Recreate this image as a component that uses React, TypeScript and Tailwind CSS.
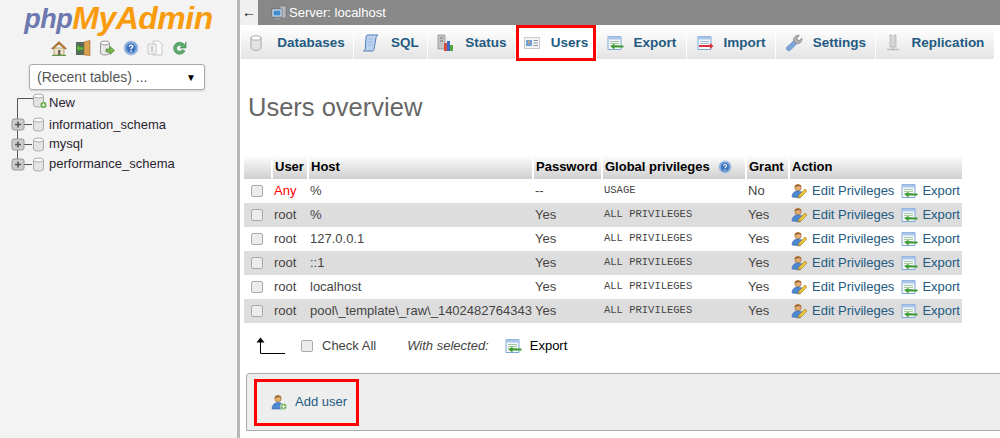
const users = [
  { user: "Any", host: "%", password: "--", privileges: "USAGE", grant: "No" },
  { user: "root", host: "%", password: "Yes", privileges: "ALL PRIVILEGES", grant: "Yes" },
  { user: "root", host: "127.0.0.1", password: "Yes", privileges: "ALL PRIVILEGES", grant: "Yes" },
  { user: "root", host: "::1", password: "Yes", privileges: "ALL PRIVILEGES", grant: "Yes" },
  { user: "root", host: "localhost", password: "Yes", privileges: "ALL PRIVILEGES", grant: "Yes" },
  { user: "root", host: "pool\\_template\\_raw\\_1402482764343", password: "Yes", privileges: "ALL PRIVILEGES", grant: "Yes" },
];

function DbIcon({ size = 14 }: { size?: number }) {
  return (
    <svg width={size} height={size + 2} viewBox="0 0 14 16">
      <path d="M2 3v10c0 1.4 2.2 2.4 5 2.4s5-1 5-2.4V3z" fill="#e4e4e4" stroke="#aaa" />
      <ellipse cx="7" cy="3" rx="5" ry="2.2" fill="#fafafa" stroke="#aaa" />
    </svg>
  );
}

function HomeIcon() {
  return (
    <svg width="16" height="16" viewBox="0 0 16 16">
      <path d="M3 8h10v7H3z" fill="#efe3c4" stroke="#9a8a60" strokeWidth=".7" />
      <path d="M7 10h2.4v5H7z" fill="#6a6a6a" />
      <path d="M0.5 8.5 8 1.5l7.500 7-1.500.6L8 4 2 9.100z" fill="#b8742a" stroke="#8a5520" strokeWidth=".5" />
      <path d="M1 15.500h14" stroke="#5b9a3c" strokeWidth="1.200" />
    </svg>
  );
}

function DoorIcon() {
  return (
    <svg width="16" height="16" viewBox="0 0 16 16">
      <path d="M1 2h13v13H1z" fill="#596a5c" />
      <path d="M9 2l6-1.500v15L9 15z" fill="#d8a050" stroke="#9a6a28" strokeWidth=".6" />
      <path d="M1 8l3.500-3.500V7h4v3h-4v2.500z" fill="#64b448" stroke="#2f7a22" strokeWidth=".5" />
    </svg>
  );
}

function DbArrowIcon() {
  return (
    <svg width="16" height="16" viewBox="0 0 16 16">
      <path d="M1.500 3v10c0 1.200 2 2 4.500 2s4.500-.8 4.500-2V3z" fill="#e8e8e8" stroke="#999" />
      <ellipse cx="6" cy="3" rx="4.500" ry="2" fill="#fafafa" stroke="#999" />
      <path d="M7 9h4V6.500l4.500 4-4.500 4V12H7z" fill="#78b84c" stroke="#3f7a28" strokeWidth=".6" />
    </svg>
  );
}

function HelpIcon({ size = 16 }: { size?: number }) {
  return (
    <svg width={size} height={size} viewBox="0 0 16 16">
      <circle cx="8" cy="8" r="7" fill="#7fa8dc" stroke="#b5c8e2" />
      <circle cx="8" cy="8" r="4.600" fill="#3d72bc" />
      <path d="M6.300 6.600c.2-2 3.500-2 3.500 0 0 1.200-1.800 1.300-1.800 2.600" fill="none" stroke="#fff" strokeWidth="1.300" />
      <path d="M7.300 10.300h1.400v1.400H7.300z" fill="#fff" />
    </svg>
  );
}

function DocsIcon() {
  return (
    <svg width="16" height="16" viewBox="0 0 16 16">
      <path d="M6 1h6l3 3v11H6z" fill="#fafafa" stroke="#c8c8c8" />
      <path d="M1 4h8v10H1z" fill="#f2f2f2" stroke="#c8c8c8" />
      <path d="M4 6h2v6H4z" fill="#ccc" />
    </svg>
  );
}

function ReloadIcon() {
  return (
    <svg width="16" height="16" viewBox="0 0 16 16">
      <path d="M14 5.500A6 6 0 1 0 14 11l-2.800-1.300a3 3 0 1 1-.2-3.100L9 8h6V2z" fill="#5cae6c" stroke="#2f7a45" strokeWidth=".6" />
    </svg>
  );
}

function ServerIcon() {
  return (
    <svg width="16" height="16" viewBox="0 0 16 16">
      <path d="M9 1h6v12H9z" fill="#b4b8bc" stroke="#6a6f75" strokeWidth=".6" />
      <path d="M1 4h10v8H1z" fill="#dfe6ee" stroke="#5c6670" strokeWidth=".7" />
      <path d="M2.500 5.500h7v5h-7z" fill="#3f8fd0" />
      <path d="M4 13h5v1.500H4z" fill="#9aa0a6" />
    </svg>
  );
}

function ScrollIcon() {
  return (
    <svg width="18" height="18" viewBox="0 0 18 18">
      <path d="M5 1h11c-1.500 1-2 2-2.200 4L12 15c-.3 1.500-1 2-2 2H1.500c1-.4 1.600-1 1.800-2.500L4 4c.1-1.500.3-2.400 1-3z" fill="#bcd2ee" stroke="#4f7fb8" />
      <path d="M6.500 5h5M6 8h5M5.500 11h5" stroke="#8fb0d8" strokeWidth=".8" />
    </svg>
  );
}

function StatusIcon() {
  return (
    <svg width="18" height="18" viewBox="0 0 18 18">
      <path d="M2 1h7v14H2z" fill="#c4c4c4" stroke="#8a8a8a" strokeWidth=".7" />
      <path d="M4 4h3M4 7h3" stroke="#777" />
      <path d="M8 9h3v8H8z" fill="#d84a3a" />
      <path d="M11 7h3v10h-3z" fill="#3c6ec8" />
      <path d="M14 11h3v6h-3z" fill="#52a83c" />
    </svg>
  );
}

function UsersCardIcon() {
  return (
    <svg width="16" height="12" viewBox="0 0 16 12">
      <path d="M.5 .5h15v11H.5z" fill="#f4f4f4" stroke="#c8c8c8" />
      <path d="M2 3h6v6H2z" fill="#6c9ed8" />
      <path d="M4 4h2v2.500H4z" fill="#d8a060" />
      <path d="M9.500 3.500h4.500M9.500 6h4.500M9.500 8.500h4.500" stroke="#8a96a8" />
    </svg>
  );
}

function TableArrowIcon({ direction = "in" }: { direction?: "in" | "out" }) {
  const color = direction === "in" ? "#3d9a2e" : "#e0303a";
  return (
    <svg width="17" height="16" viewBox="0 0 17 16">
      <path d="M1 1.500h13v13H1z" fill="#f4f8fc" stroke="#7ea6d6" />
      <path d="M1 1.500h13v3H1z" fill="#a9c6e8" />
      <path d="M3 6.500h9M3 8.500h9M3 10.500h9" stroke={direction === "in" ? "#a8c8a0" : "#a0bce0"} />
      {direction === "in" ? (
        <path d="M16.500 10.500H7.500V8.500L3.500 11.500l4 3v-2h9z" fill={color} />
      ) : (
        <path d="M2 10h11V8l3.500 3-3.500 3v-2H2z" fill={color} />
      )}
    </svg>
  );
}

function WrenchIcon() {
  return (
    <svg width="18" height="18" viewBox="0 0 18 18">
      <path d="M1.500 13.500 9 6.500l3 3-7 7c-1.500 1-4.500-1-3.500-3z" fill="#7fa4dc" stroke="#5a80b8" strokeWidth=".6" />
      <path d="M8.500 7C8 3.500 11 .5 14.500 1.500L12 4l.5 2 2 .5 2.500-2.500c.5 3.500-2.500 6.500-5.500 5.500z" fill="#b0b0b0" stroke="#7a7a7a" strokeWidth=".6" />
    </svg>
  );
}

function ReplicationIcon() {
  return (
    <svg width="14" height="18" viewBox="0 0 14 18">
      <path d="M4 1h2v12H4zM8 1h2v12H8z" fill="#ddd" stroke="#aaa" strokeWidth=".7" />
      <path d="M6.500 13h1v2h-1z" fill="#999" />
      <path d="M1 15.500h12" stroke="#bbb" strokeWidth="1.500" />
    </svg>
  );
}

function EditUserIcon() {
  return (
    <svg width="16" height="16" viewBox="0 0 16 16" className="shrink-0">
      <circle cx="7" cy="4.500" r="3.200" fill="#e8b070" stroke="#8a5a2a" strokeWidth=".6" />
      <path d="M3.800 4C4 1.500 10 1.500 10.200 4L8 3z" fill="#7a4a1e" />
      <path d="M1 14c0-4 2.500-6 6-6s5 1.500 5 3l-3 4z" fill="#4f86d0" stroke="#2f5f9f" strokeWidth=".5" />
      <path d="M7 15l1-3 6-6 2 2-6 6z" fill="#f0c040" stroke="#a07a18" strokeWidth=".6" />
    </svg>
  );
}

function AddUserIcon() {
  return (
    <svg width="16" height="16" viewBox="0 0 16 16">
      <circle cx="7" cy="4.500" r="3.200" fill="#e8b070" stroke="#8a5a2a" strokeWidth=".6" />
      <path d="M3.800 4C4 1.500 10 1.500 10.200 4L8 3z" fill="#7a4a1e" />
      <path d="M1 15c0-4 2.500-6.500 6-6.500s5 2 5 4v2.500z" fill="#4f86d0" stroke="#2f5f9f" strokeWidth=".5" />
      <circle cx="12.500" cy="12.500" r="3.200" fill="#5aa83e" stroke="#fff" strokeWidth=".6" />
      <path d="M12.500 10.500v4M10.500 12.500h4" stroke="#fff" strokeWidth="1.200" />
    </svg>
  );
}

function TreeRow({ name, first = false, last = false }: { name: string; first?: boolean; last?: boolean }) {
  return (
    <div className="flex h-[19.6px] items-center">
      <svg width="48" height="20" viewBox="0 0 48 20" className="ml-[1px] shrink-0 overflow-visible">
        {first ? (
          <path d="M16.500 20V3.500H32" fill="none" stroke="#555" />
        ) : (
          <>
            <path d={last ? "M16.500 0v10" : "M16.500 0v20"} fill="none" stroke="#555" />
            <path d="M21 10.500h10" fill="none" stroke="#555" />
            <rect x="11" y="5" width="12" height="11" rx="2" fill="#ccc" stroke="#999" />
            <path d="M14 10.500h6M17 7.500v6" stroke="#555" strokeWidth="1.600" />
          </>
        )}
        <g transform={first ? "translate(32 -2)" : "translate(32 3)"}>
          <path d="M0.500 3v9c0 1.300 2 2 5 2s5-.7 5-2V3z" fill="#e4e4e4" stroke="#aaa" />
          <ellipse cx="5.500" cy="3" rx="5" ry="2" fill="#fafafa" stroke="#aaa" />
          {first && (
            <>
              <circle cx="10.500" cy="12" r="3" fill="#58a83c" />
              <path d="M8.700 12h3.600M10.500 10.200v3.600" stroke="#fff" strokeWidth="1" />
            </>
          )}
        </g>
      </svg>
      <span className={first ? "-mt-[4px] text-[13px] text-[#235a81]" : "text-[13px] text-[#235a81]"} style={{ color: "#2a2430" }}>
        {name}
      </span>
    </div>
  );
}

const tabs = [
  { label: "Databases", width: "w-[112px]", gap: "gap-[14px]", icon: <DbIcon /> },
  { label: "SQL", width: "w-[73px]", gap: "gap-[11px]", icon: <ScrollIcon /> },
  { label: "Status", width: "w-[87px]", gap: "gap-[11px]", icon: <StatusIcon /> },
  { label: "Users", width: "w-[80px]", gap: "gap-[11px]", icon: <UsersCardIcon />, active: true },
  { label: "Export", width: "w-[89px]", gap: "gap-[10px]", icon: <TableArrowIcon /> },
  { label: "Import", width: "w-[88px]", gap: "gap-[10px]", icon: <TableArrowIcon direction="out" /> },
  { label: "Settings", width: "w-[99px]", gap: "gap-[10px]", icon: <WrenchIcon /> },
  { label: "Replication", width: "w-[118px]", gap: "gap-[12px]", icon: <ReplicationIcon /> },
];

export default function App() {
  return (
    <div className="flex h-[438px] w-[1000px] overflow-hidden bg-white font-['Liberation_Sans',Arial,sans-serif] text-[13px] text-[#444]">
      {/* Navigation */}
      <aside className="flex w-[240px] shrink-0 flex-col border-r-[3px] border-[#b8b8b8] bg-[#f3f3f3]">
        <div className="mt-[1px] flex h-[34px] items-center justify-center pl-[0px] font-bold italic leading-none tracking-[-0.5px]">
          <span className="mt-[2px] text-[27px] text-[#6c78af]">php</span>
          <span className="text-[32px] text-[#f89c0e]">MyAdmin</span>
        </div>
        <div className="mt-[4px] flex h-[18px] items-center justify-center gap-[8px] pl-[-2px]">
          <HomeIcon />
          <DoorIcon />
          <DbArrowIcon />
          <HelpIcon />
          <DocsIcon />
          <ReloadIcon />
        </div>
        <div className="mx-[29px] mt-[7px] flex h-[26px] w-[176px] items-center justify-between rounded-[3px] border border-[#aaa] bg-white pl-[7px] pr-[8px] text-[14px] text-[#555] shadow-[0_1px_2px_#ccc]">
          <span>(Recent tables) ...</span>
          <span className="text-[10px] text-black">▼</span>
        </div>
        <div className="mt-[5px] flex flex-col">
          <TreeRow name="New" first />
          <TreeRow name="information_schema" />
          <TreeRow name="mysql" />
          <TreeRow name="performance_schema" last />
        </div>
      </aside>

      {/* Main */}
      <main className="flex min-w-0 flex-1 flex-col">
        <div className="flex h-[25px] shrink-0 items-center bg-[#888]">
          <div className="flex h-[25px] w-[18px] items-center justify-center bg-[#f0f0f0] text-[14px] text-black">←</div>
          <div className="ml-[13px] flex items-center gap-[2px] text-white">
            <ServerIcon />
            <span className="text-[13px]">Server: localhost</span>
          </div>
        </div>

        <nav className="mt-[2px] flex h-[32px] shrink-0 gap-[1px] pl-[1px] text-[13.500px] font-bold text-[#235a81]">
          {tabs.map((tab) => (
            <div
              key={tab.label}
              className={`relative flex h-[32px] items-center justify-center ${tab.gap} ${tab.width} ${
                tab.active ? "bg-white" : "bg-gradient-to-b from-white to-[#e4e4e4]"
              }`}
            >
              {tab.active && <div className="absolute inset-x-0 -top-[2px] -bottom-[2px] border-[3px] border-[#f00]" />}
              {tab.icon}
              <span>{tab.label}</span>
            </div>
          ))}
        </nav>

        <h2 className="ml-[8px] mt-[33px] text-[25.500px] leading-[30px] text-[#666]">Users overview</h2>

        <table className="ml-[4px] mt-[33px] w-[718px] table-fixed border-collapse">
          <colgroup>
            <col className="w-[28px]" />
            <col className="w-[36px]" />
            <col className="w-[225px]" />
            <col className="w-[69px]" />
            <col className="w-[144px]" />
            <col className="w-[43px]" />
            <col className="w-[173px]" />
          </colgroup>
          <thead>
            <tr className="h-[24px] bg-gradient-to-b from-white to-[#cfcfcf] text-left font-bold text-black">
              <th className="border-r-2 border-white" />
              <th className="border-r-2 border-white pl-[2px]">User</th>
              <th className="border-r-2 border-white pl-[2px]">Host</th>
              <th className="border-r-2 border-white pl-[2px]">Password</th>
              <th className="border-r-2 border-white pl-[2px]">
                <span className="flex items-center gap-[8px]">
                  Global privileges
                  <HelpIcon size={14} />
                </span>
              </th>
              <th className="border-r-2 border-white pl-[2px]">Grant</th>
              <th className="pl-[2px]">Action</th>
            </tr>
          </thead>
          <tbody>
            {users.map((row, i) => (
              <tr key={i} className={`h-[24px] ${i % 2 === 1 ? "bg-[#ddd]" : "bg-white"}`}>
                <td className="pl-[7px]">
                  <div className="h-[12px] w-[12px] rounded-[2px] border border-[#aaa] bg-[#ececec]" />
                </td>
                <td className={`pl-[2px] ${row.user === "Any" ? "text-[#f00]" : ""}`}>{row.user}</td>
                <td className="whitespace-nowrap pl-[2px]">{row.host}</td>
                <td className="pl-[2px]">{row.password}</td>
                <td className="pl-[2px] font-['Liberation_Mono',monospace] text-[10.500px] text-[#444]">{row.privileges}</td>
                <td className="pl-[2px]">{row.grant}</td>
                <td className="pl-[2px] text-[#235a81]">
                  <div className="-mt-[1px] flex items-center">
                    <EditUserIcon />
                    <span className="ml-[5px] whitespace-nowrap">Edit Privileges</span>
                    <span className="ml-[7px] shrink-0">
                      <TableArrowIcon />
                    </span>
                    <span className="ml-[4px]">Export</span>
                  </div>
                </td>
              </tr>
            ))}
          </tbody>
        </table>

        <div className="ml-[16px] mt-[11px] flex h-[24px] items-center">
          <svg width="30" height="18" viewBox="0 0 30 18" className="shrink-0">
            <path d="M4.500 16.500V3M4.500 16.500H29" fill="none" stroke="#000" />
            <path d="M0.500 5.500 4.500 .5l4 5z" fill="#000" />
          </svg>
          <div className="ml-[15px] h-[12px] w-[12px] rounded-[2px] border border-[#aaa] bg-[#ececec]" />
          <span className="ml-[9px]">Check All</span>
          <span className="ml-[31px] italic">With selected:</span>
          <span className="ml-[16px] shrink-0">
            <TableArrowIcon />
          </span>
          <span className="ml-[8px] text-black">Export</span>
        </div>

        <div className="ml-[6px] mt-[15px] flex h-[58px] items-center rounded-tl-[4px] border border-r-0 border-[#aaa] bg-[#eee] pl-[7px]">
          <div className="flex h-[47px] w-[105px] items-center gap-[8px] border-[3px] border-[#f00] pl-[14px] text-[#235a81]">
            <AddUserIcon />
            <span>Add user</span>
          </div>
        </div>
      </main>
    </div>
  );
}
